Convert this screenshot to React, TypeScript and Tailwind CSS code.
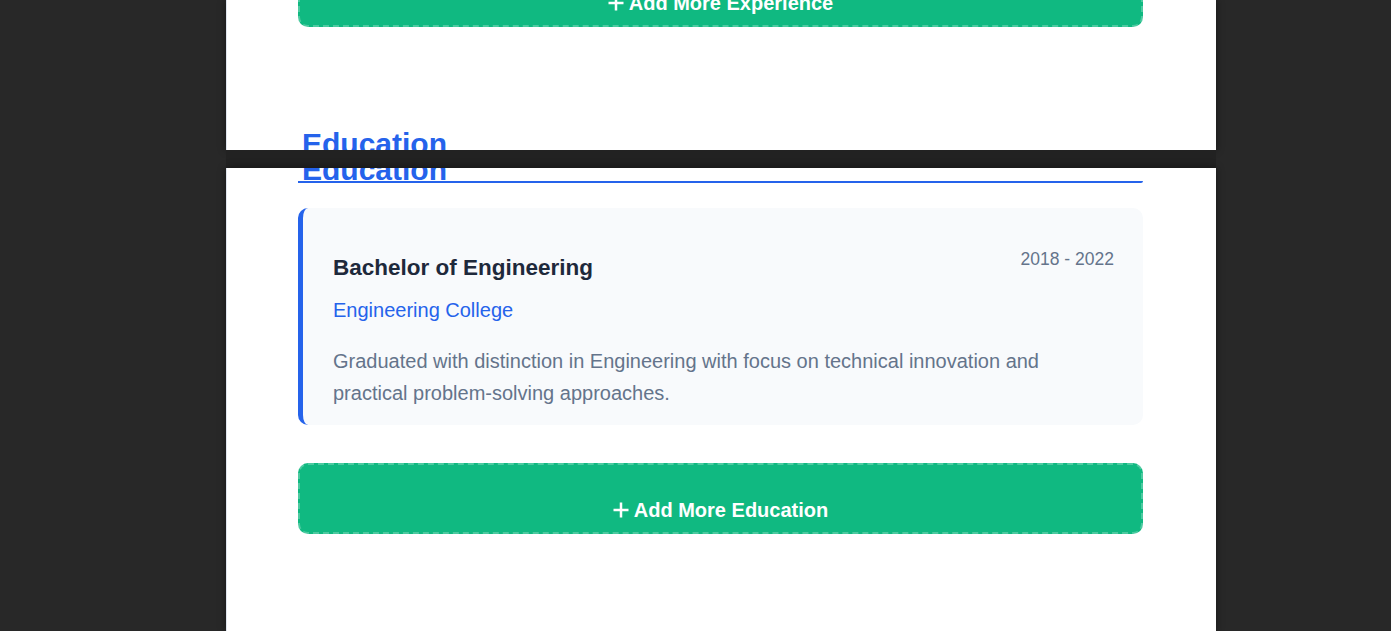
import React from 'react';

function PlusIcon() {
  return (
    <svg width="16" height="16" viewBox="0 0 16 16" className="shrink-0">
      <path d="M8 0.5V15.5M0.5 8H15.5" stroke="white" strokeWidth="2.5" fill="none" />
    </svg>
  );
}

function AddButton({ label, className = '' }: { label: string; className?: string }) {
  return (
    <button
      className={`w-full h-[71px] rounded-[10px] bg-[#10b981] border-2 border-dashed border-white/25 flex items-start justify-center gap-[5px] pt-[29px] text-white font-bold text-[20px] leading-[32px] ${className}`}
    >
      <span className="h-[32px] flex items-center">
        <PlusIcon />
      </span>
      {label}
    </button>
  );
}

function SectionHeading({ className = '', underline = false }: { className?: string; underline?: boolean }) {
  return (
    <h2
      className={`text-[30px] font-bold text-[#2563eb] leading-[22px] pl-[4px] ${underline ? 'border-b-2 border-[#2563eb] rounded-br-[2px]' : ''} ${className}`}
    >
      Education
    </h2>
  );
}

export default function App() {
  return (
    <div className="h-screen w-full overflow-hidden bg-[#282828] font-['Liberation_Sans',Arial,sans-serif]">
      <div className="ml-[226px] w-[990px] h-full flex flex-col">
        {/* end of page 1 */}
        <div className="h-[150px] shrink-0 overflow-hidden bg-white border-l border-[#dfe5ee] pl-[71px] pr-[73px] shadow-[0_0_8px_rgba(0,0,0,0.45)]">
          <AddButton label="Add More Experience" className="mt-[-44px]" />
          <SectionHeading className="mt-[106px]" underline />
        </div>

        <div className="h-[18px] shrink-0 bg-[#222222]" />

        {/* page 2 */}
        <div className="flex-1 overflow-hidden bg-white border-l border-[#dfe5ee] pl-[71px] pr-[73px] shadow-[0_0_8px_rgba(0,0,0,0.45)]">
          <SectionHeading className="mt-[-9px] mb-[25px]" underline />

          <div className="rounded-[10px] bg-[#f8fafc] border-l-[5px] border-[#2563eb] pt-[37px] pl-[30px] pr-[29px] pb-[16px]">
            <div className="flex justify-between items-start mb-[8px]">
              <h3 className="text-[22.5px] font-bold text-[#1e293b] leading-[36px] mt-[5px]">
                Bachelor of Engineering
              </h3>
              <span className="text-[17.5px] text-[#64748b] leading-[28px]">2018 - 2022</span>
            </div>
            <p className="text-[20px] text-[#2563eb] leading-[32px]">Engineering College</p>
            <p className="mt-[19px] text-[20px] text-[#64748b] leading-[32px]">
              Graduated with distinction in Engineering with focus on technical innovation and practical
              problem-solving approaches.
            </p>
          </div>

          <AddButton label="Add More Education" className="mt-[38px]" />
        </div>
      </div>
    </div>
  );
}
